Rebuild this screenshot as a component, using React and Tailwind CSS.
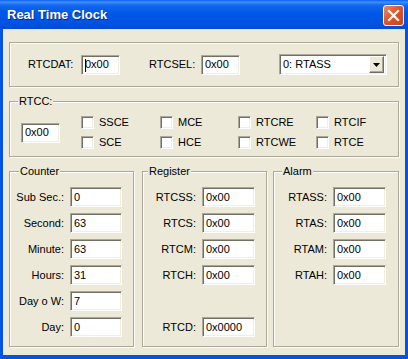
// App.jsx — Real Time Clock dialog (XP style)
const FONT = "font-['Liberation_Sans',Arial,sans-serif]"
const SUNKEN = 'border border-t-[#aca899] border-l-[#aca899] border-r-white border-b-white shadow-[inset_1px_1px_0_#716f64,inset_-1px_-1px_0_#f1efe2] bg-white'
const ETCHED = 'relative border border-[#aca899] shadow-[inset_1px_1px_0_#fff,1px_1px_0_#fff]'

const COUNTER = [
  ['Sub Sec.:', '0'],
  ['Second:', '63'],
  ['Minute:', '63'],
  ['Hours:', '31'],
  ['Day o W:', '7'],
  ['Day:', '0'],
]
const REGISTER = [
  ['RTCSS:', '0x00'],
  ['RTCS:', '0x00'],
  ['RTCM:', '0x00'],
  ['RTCH:', '0x00'],
  [null, null],
  ['RTCD:', '0x0000'],
]
const ALARM = [
  ['RTASS:', '0x00'],
  ['RTAS:', '0x00'],
  ['RTAM:', '0x00'],
  ['RTAH:', '0x00'],
]
const CHECKS = ['SSCE', 'MCE', 'RTCRE', 'RTCIF', 'SCE', 'HCE', 'RTCWE', 'RTCE']

function Field({ value, w = 'w-[39px]', caret }) {
  return (
    <div className={`${SUNKEN} ${w} h-[20px] flex items-center pl-[3px] text-[11px] text-black leading-none relative`}>
      {caret && <span className="absolute left-[3px] top-[3px] w-px h-[13px] bg-black" />}
      {value}
    </div>
  )
}

function Group({ label, labelLeft = 'left-[8px]', className = '', children }) {
  return (
    <div className={`${ETCHED} ${className}`}>
      {label && (
        <span className={`absolute -top-[7px] ${labelLeft} px-px bg-[#ece9d8] text-[11px] leading-[13px] text-black`}>{label}</span>
      )}
      {children}
    </div>
  )
}

function Rows({ rows, labelW, inputW }) {
  return (
    <div className="flex flex-col gap-[6px] pt-[15px]">
      {rows.map(([l, v], i) => (
        <div key={i} className="flex items-center h-[20px]">
          {l && (
            <>
              <span className={`${labelW} text-right text-[11px] text-black pr-[6px]`}>{l}</span>
              <Field value={v} w={inputW} />
            </>
          )}
        </div>
      ))}
    </div>
  )
}

export default function App() {
  return (
    <div className={`w-[408px] h-[359px] bg-[#0553e1] flex flex-col ${FONT} select-none`}>
      {/* title bar */}
      <div className="h-[29px] flex items-start bg-[linear-gradient(to_bottom,#0a5ef8_0%,#4090f5_7%,#1467f0_18%,#0058e8_45%,#0054e3_75%,#004bd6_100%)]">
        <span className="mt-[7px] ml-[7px] text-white font-bold text-[13px] leading-[16px] [text-shadow:1px_1px_0_#0a2a8c]">Real Time Clock</span>
        <div className="ml-auto mr-[4px] mt-[5px] w-[21px] h-[21px] rounded-[3px] border border-white bg-[linear-gradient(135deg,#f08a64_0%,#e0562b_45%,#c8431b_100%)] flex items-center justify-center">
          <svg width="13" height="13" viewBox="0 0 13 13">
            <path d="M2 2 L11 11 M11 2 L2 11" stroke="#fff" strokeWidth="2.2" strokeLinecap="square" />
          </svg>
        </div>
      </div>

      {/* client area */}
      <div className="flex-1 mx-[3px] mb-[4px] bg-[#ece9d8] px-[6px] pt-[13px] text-black">
        <Group className="h-[45px] flex items-center">
          <span className="w-[53px] pl-[18px] box-content text-[11px]">RTCDAT:</span>
          <Field value="0x00" caret />
          <span className="ml-[29px] w-[52px] text-[11px]">RTCSEL:</span>
          <Field value="0x00" />
          <div className={`${SUNKEN} ml-[39px] w-[108px] h-[21px] flex items-center justify-between pl-[3px] pr-[2px] text-[11px]`}>
            <span>0: RTASS</span>
            <div className="w-[15px] h-[17px] bg-[#ece9d8] border border-t-white border-l-white border-r-[#716f64] border-b-[#716f64] shadow-[inset_-1px_-1px_0_#aca899] flex items-center justify-center">
              <svg width="7" height="4" viewBox="0 0 7 4"><path d="M0 0h7L3.5 4z" fill="#000" /></svg>
            </div>
          </div>
        </Group>

        <Group label="RTCC:" className="mt-[14px] h-[56px] flex items-start pt-[14px]">
          <div className="flex items-center">
            <div className="ml-[11px]"><Field value="0x00" /></div>
            <div className="ml-[21px] grid grid-cols-[79px_78px_78px_60px] gap-y-[7px]">
              {CHECKS.map(c => (
                <div key={c} className="flex items-center h-[13px] gap-[5px]">
                  <span className={`${SUNKEN} w-[13px] h-[13px]`} />
                  <span className="text-[11px]">{c}</span>
                </div>
              ))}
            </div>
          </div>
        </Group>

        <div className="mt-[14px] flex h-[176px]">
          <Group label="Counter" labelLeft="left-[9px]" className="w-[125px]">
            <Rows rows={COUNTER} labelW="w-[60px]" inputW="w-[52px]" />
          </Group>
          <Group label="Register" labelLeft="left-[5px]" className="w-[125px] ml-[8px]">
            <Rows rows={REGISTER} labelW="w-[59px]" inputW="w-[53px]" />
          </Group>
          <Group label="Alarm" labelLeft="left-[8px]" className="w-[126px] ml-[6px]">
            <Rows rows={ALARM} labelW="w-[59px]" inputW="w-[53px]" />
          </Group>
        </div>
      </div>
    </div>
  )
}
